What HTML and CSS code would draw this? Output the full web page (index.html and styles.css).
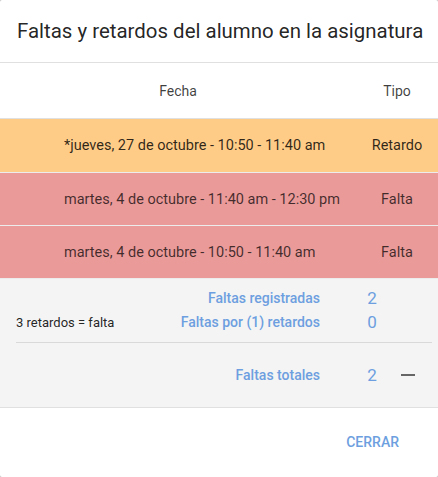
FILE: index.html
```html
<!DOCTYPE html>
<html lang="es">
<head>
<meta charset="utf-8">
<title>Faltas y retardos</title>
<link rel="stylesheet" href="styles.css">
</head>
<body>
<div class="dialog">
  <div class="dialog-title">Faltas y retardos del alumno en la asignatura</div>
  <div class="table">
    <div class="thead">
      <div class="th">Fecha</div>
      <div class="th">Tipo</div>
    </div>
    <div class="row row-late">
      <div class="cell-date">*jueves, 27 de octubre - 10:50 - 11:40 am</div>
      <div class="cell-type">Retardo</div>
    </div>
    <div class="row row-absent">
      <div class="cell-date">martes, 4 de octubre - 11:40 am - 12:30 pm</div>
      <div class="cell-type">Falta</div>
    </div>
    <div class="row row-absent">
      <div class="cell-date">martes, 4 de octubre - 10:50 - 11:40 am</div>
      <div class="cell-type">Falta</div>
    </div>
  </div>
  <div class="summary">
    <div class="summary-top">
      <div class="note"></div>
      <div class="label">Faltas registradas</div>
      <div class="num">2</div>
      <div class="dash-cell"></div>
      <div class="note">3 retardos = falta</div>
      <div class="label">Faltas por (1) retardos</div>
      <div class="num">0</div>
      <div class="dash-cell"></div>
    </div>
    <div class="summary-total">
      <div class="note"></div>
      <div class="label">Faltas totales</div>
      <div class="num">2</div>
      <div class="dash-cell"><span class="dash"></span></div>
    </div>
  </div>
  <div class="actions">
    <button class="btn">Cerrar</button>
  </div>
</div>
</body>
</html>
```

FILE: styles.css
```css
html {
  background: #bdbdbd;
}
body {
  margin: 0;
  font-family: Roboto, "Noto Sans", "Liberation Sans", sans-serif;
  color: rgba(0, 0, 0, 0.87);
}
.dialog {
  background: #fff;
  height: 477px;
  border-radius: 2px;
  overflow: hidden;
}
.dialog-title {
  height: 62px;
  display: flex;
  align-items: center;
  padding-left: 17px;
  font-size: 20.45px;
  font-weight: 400;
  color: rgba(0, 0, 0, 0.87);
  border-bottom: 1px solid #e0e0e0;
}
.thead,
.row {
  display: grid;
  grid-template-columns: 356px 1fr;
  align-items: center;
}
.thead {
  height: 55px;
  border-bottom: 1px solid #e0e0e0;
  font-size: 14px;
  color: rgba(0, 0, 0, 0.75);
  text-align: center;
}
.row {
  height: 52px;
  border-bottom: 1px solid #ececec;
  font-size: 14.5px;
}
.row-late {
  height: 53px;
  background: #ffcc88;
  color: rgba(0, 0, 0, 0.82);
}
.row-absent {
  background: #eb9a9a;
  color: rgba(0, 0, 0, 0.72);
}
.cell-date {
  padding-left: 64px;
}
.cell-type {
  text-align: center;
}
.summary {
  background: #f4f4f4;
  padding: 0 6px 0 16px;
  border-bottom: 1px solid #e0e0e0;
}
.summary-top,
.summary-total {
  display: grid;
  grid-template-columns: 1fr auto 72px 40px;
  align-items: center;
}
.summary-top {
  grid-auto-rows: 24px;
  padding: 7px 0 8px;
  border-bottom: 1px solid #d9d9d9;
}
.summary-total {
  height: 64px;
}
.note {
  font-size: 13px;
  color: rgba(0, 0, 0, 0.87);
}
.label {
  font-size: 14px;
  font-weight: 500;
  color: #6d9fe0;
  text-align: right;
}
.num {
  padding-left: 32px;
  text-align: center;
  font-size: 17px;
  color: #6d9fe0;
}
.dash-cell {
  display: flex;
  align-items: center;
  padding-left: 9px;
}
.dash {
  width: 14px;
  height: 2px;
  background: #666;
}
.actions {
  display: flex;
  justify-content: flex-end;
  padding: 16px 23px 0 0;
}
.btn {
  border: 0;
  background: transparent;
  font-family: inherit;
  font-size: 14px;
  font-weight: 500;
  text-transform: uppercase;
  color: #6d9fe0;
  padding: 0 16px;
  height: 36px;
  cursor: pointer;
}
```
